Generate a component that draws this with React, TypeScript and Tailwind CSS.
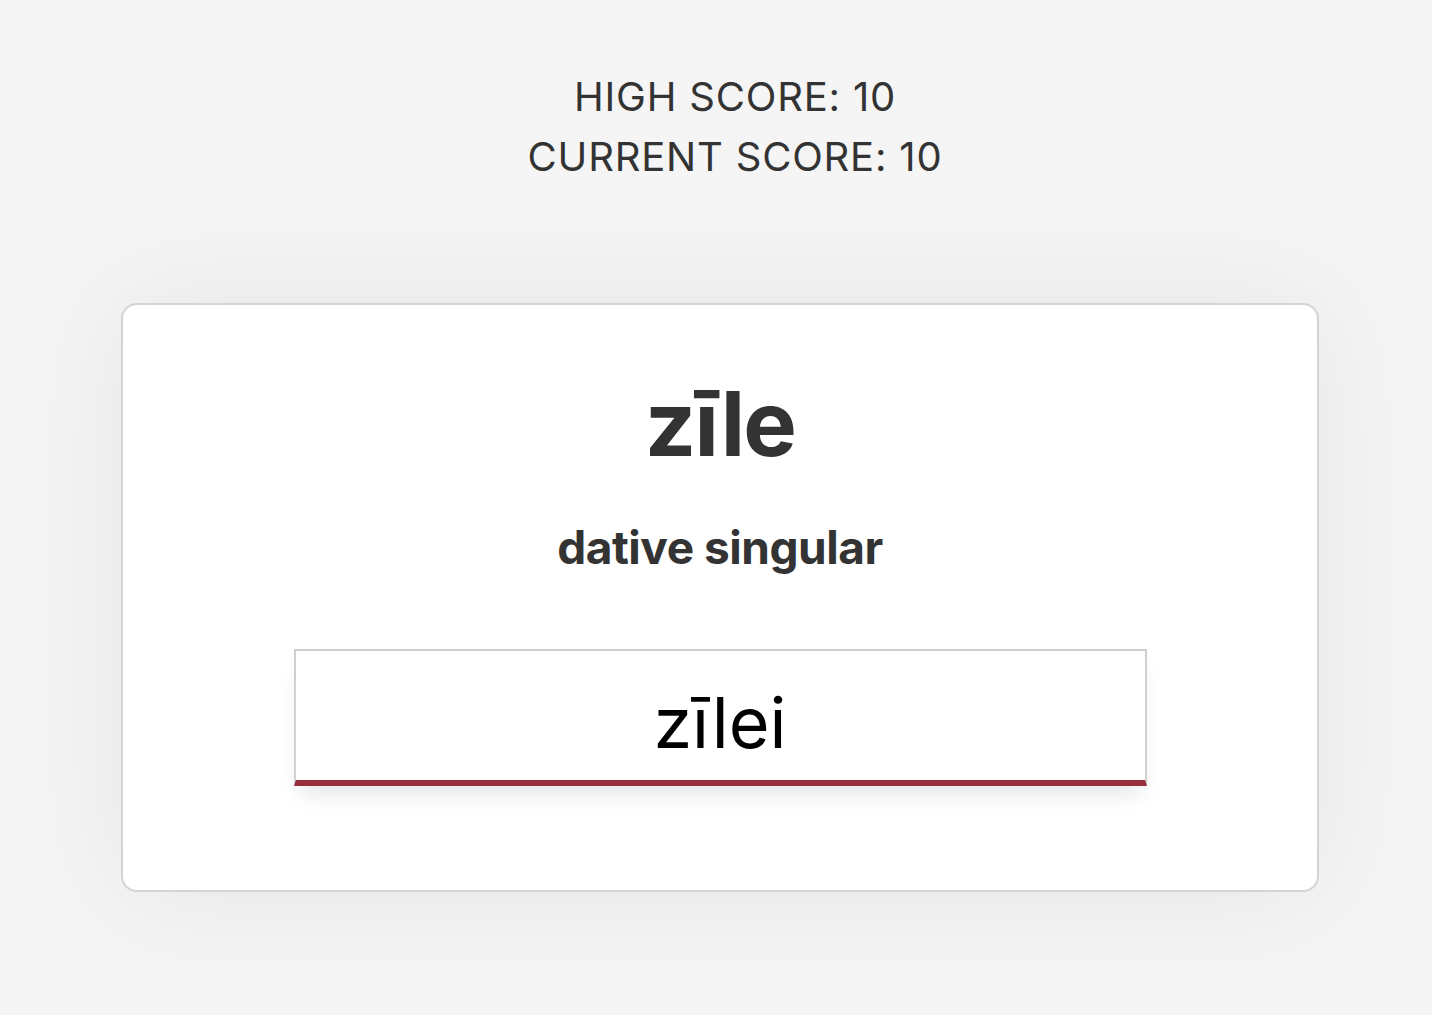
export default function App() {
  const scores = { high: 10, current: 10 };

  return (
    <main
      className="min-h-screen w-full bg-[#f5f5f5] text-[#333] pt-[67px]"
      style={{ fontFamily: "Inter, 'Noto Sans', sans-serif" }}
    >
      {/* SCORES */}
      <div className="flex flex-col items-center pl-[38px] text-[40px] leading-[60px] tracking-[0.02em]">
        <p>HIGH SCORE: {scores.high}</p>
        <p>CURRENT SCORE: {scores.current}</p>
      </div>

      {/* CARD */}
      <div className="ml-[121px] mt-[116px] w-[1198px] h-[589px] bg-white rounded-[16px] border-2 border-[#d4d4d4] shadow-[0_0_120px_rgba(0,0,0,0.07)] flex flex-col items-center pt-[64px]">
        <h1 className="text-[90px] font-bold leading-[110px] tracking-[-0.02em]">zīle</h1>
        <h2 className="mt-[38px] text-[46px] font-bold leading-[60px] tracking-[-0.01em]">dative singular</h2>

        <input
          className="mt-[72px] w-[853px] h-[137px] pt-[14px] border-2 border-[#d0d0d0] border-b-[6px] border-b-[#962e3d] bg-white text-center text-[70px] text-black outline-none shadow-[0_14px_20px_-6px_rgba(0,0,0,0.1)]"
          defaultValue="zīlei"
        />
      </div>
    </main>
  );
}
